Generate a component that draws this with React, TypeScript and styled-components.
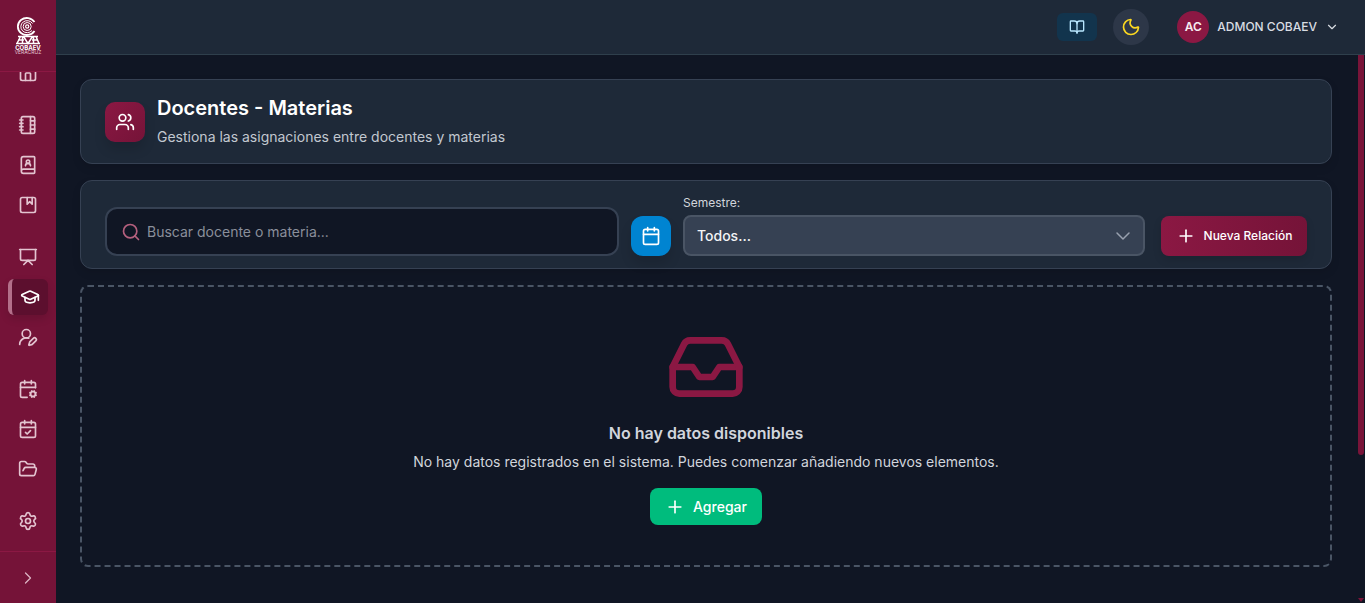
import React from "react";
import styled, { createGlobalStyle, css } from "styled-components";
import {
  House, NotebookTabs, BookUser, Album, Presentation, GraduationCap, UserRoundPen,
  CalendarCog, CalendarCheck, FolderOpen, Settings, ChevronRight, ChevronDown,
  BookOpen, Moon, Users, Search, Calendar, Plus, Inbox,
} from "lucide-react";

const Global = createGlobalStyle`
  *, *::before, *::after { box-sizing: border-box; }
  body {
    margin: 0;
    background: #101624;
    color: #d1d5dc;
    font-family: Inter, "Liberation Sans", sans-serif;
    font-size: 14px;
    line-height: 20px;
  }
  button, input, select { font: inherit; color: inherit; margin: 0; }
  h1, h2, p { margin: 0; }
`;

const Shell = styled.div`
  display: flex;
  height: 100vh;
`;

const Sidebar = styled.aside`
  flex: none;
  width: 56px;
  display: flex;
  flex-direction: column;
  background: #751338;
`;

const Brand = styled.a`
  flex: none;
  height: 72px;
  display: flex;
  align-items: center;
  justify-content: center;
  border-bottom: 1px solid #8b1843;
`;

const Nav = styled.nav`
  flex: 1;
  min-height: 0;
  overflow: hidden;
  display: flex;
  flex-direction: column;
  justify-content: flex-end;
  gap: 16px;
  padding: 0 8px 12px;
`;

const NavGroup = styled.div`
  flex: none;
  display: flex;
  flex-direction: column;
  gap: 4px;
`;

const NavLink = styled.a<{ $active?: boolean }>`
  height: 36px;
  display: flex;
  align-items: center;
  justify-content: center;
  border-radius: 6px;
  color: #e3c4d0;
  ${(p) => p.$active && css`
    color: #fff;
    background: #5c0f2e;
    border-left: 4px solid #b3708a;
    box-shadow: 0 4px 8px rgba(0, 0, 0, 0.12);
  `}
`;

const Expand = styled.button`
  flex: none;
  height: 52px;
  display: flex;
  align-items: center;
  justify-content: center;
  border: 0;
  border-top: 1px solid #8b1843;
  background: none;
  color: #dcb5c4;
`;

const Page = styled.div`
  flex: 1;
  min-width: 0;
  display: flex;
  flex-direction: column;
`;

const TopBar = styled.header`
  flex: none;
  height: 55px;
  display: flex;
  align-items: center;
  justify-content: flex-end;
  padding: 0 26px 0 24px;
  background: #1e2938;
  border-bottom: 1px solid #2f3f4c;
`;

const GuideButton = styled.button`
  width: 40px;
  height: 28px;
  display: grid;
  place-items: center;
  border: 0;
  border-radius: 6px;
  background: #12344d;
  color: #b8e6fe;
`;

const ThemeButton = styled.button`
  width: 36px;
  height: 36px;
  margin-left: 16px;
  display: grid;
  place-items: center;
  border: 0;
  border-radius: 50%;
  background: #2d3748;
  color: #fcd820;
`;

const Account = styled.button`
  margin-left: 28px;
  padding: 0;
  display: flex;
  align-items: center;
  gap: 8px;
  border: 0;
  background: none;
  color: #d8dce2;
  font-size: 12px;
  font-weight: 500;
`;

const Avatar = styled.span`
  width: 32px;
  height: 32px;
  display: grid;
  place-items: center;
  border-radius: 50%;
  background: #8b1843;
  color: #f7edf1;
  font-weight: 600;
`;

const Body = styled.div`
  flex: 1;
  min-height: 0;
  display: flex;
`;

const Main = styled.main`
  flex: 1;
  min-width: 0;
  display: flex;
  flex-direction: column;
  gap: 16px;
  padding: 24px 25px 0 24px;
  overflow: hidden;
`;

const ScrollTrack = styled.div`
  flex: none;
  width: 8px;
  display: flex;
  flex-direction: column;
  align-items: center;
  justify-content: space-between;
`;

const ScrollThumb = styled.div`
  width: 6px;
  height: 73%;
  border-radius: 0 0 3px 3px;
  background: #791439;
`;

const Card = styled.section`
  flex: none;
  border: 1px solid #364153;
  border-radius: 12px;
  background: #1e2938;
  padding: 12px 24px;
  display: flex;
  box-shadow: 0 4px 8px rgba(0, 0, 0, 0.1);
`;

const TitleCard = styled(Card)`
  align-items: center;
  gap: 12px;
  height: 85px;
`;

const TitleIcon = styled.div`
  width: 40px;
  height: 40px;
  display: grid;
  place-items: center;
  border-radius: 10px;
  background: linear-gradient(135deg, #8b1843, #751338);
  color: #fff;
  box-shadow: 0 8px 12px rgba(0, 0, 0, 0.12);
`;

const TitleText = styled.div`
  display: flex;
  flex-direction: column;
  gap: 5px;
  padding-bottom: 3px;
`;

const Title = styled.h1`
  font-size: 20px;
  line-height: 28px;
  font-weight: 600;
  color: #fff;
`;

const Subtitle = styled.p`
  color: #c2c8d0;
`;

const FilterCard = styled(Card)`
  align-items: flex-end;
`;

const SearchField = styled.label`
  flex: 1;
  height: 49px;
  display: flex;
  align-items: center;
  gap: 6px;
  padding: 0 14px;
  border: 2px solid #364153;
  border-radius: 12px;
  background: #101624;
  color: #b5607e;
`;

const SearchInput = styled.input`
  flex: 1;
  min-width: 0;
  padding: 0;
  border: 0;
  outline: 0;
  background: none;
  color: #fff;
  &::placeholder { color: #8a8f9b; opacity: 1; }
`;

const CalendarButton = styled.button`
  width: 40px;
  height: 40px;
  margin-left: 12px;
  display: grid;
  place-items: center;
  border: 0;
  border-radius: 12px;
  background: #0084d1;
  color: #fff;
  box-shadow: 0 8px 12px rgba(0, 0, 0, 0.12);
`;

const SelectField = styled.div`
  flex: 0 1 462px;
  margin-left: 12px;
  display: flex;
  flex-direction: column;
  gap: 2px;
`;

const SelectLabel = styled.label`
  font-size: 12px;
  color: #d1d5dc;
`;

const SelectBox = styled.div`
  display: grid;
  align-items: center;
  justify-items: end;
  & > * { grid-area: 1 / 1; }
  & > svg { margin-right: 10px; color: #99a1af; pointer-events: none; }
`;

const Select = styled.select`
  width: 100%;
  height: 41px;
  padding: 0 12px;
  appearance: none;
  border: 2px solid #4a5565;
  border-radius: 8px;
  background: #364153;
  color: #f3f4f6;
  font-weight: 500;
`;

const Action = styled.button<{ $tone: "wine" | "green" }>`
  flex: none;
  display: flex;
  align-items: center;
  justify-content: center;
  gap: 8px;
  padding: 0;
  border: 0;
  border-radius: 8px;
  color: #fff;
  font-weight: 500;
  white-space: nowrap;
  ${(p) => p.$tone === "wine" ? css`
    width: 146px;
    height: 40px;
    margin-left: 16px;
    font-size: 12px;
    background: linear-gradient(90deg, #8b1843, #751338);
    box-shadow: 0 4px 8px rgba(0, 0, 0, 0.12);
  ` : css`
    width: 112px;
    height: 37px;
    background: #00bc7d;
  `}
`;

const Empty = styled.section`
  flex: none;
  height: 282px;
  display: flex;
  flex-direction: column;
  align-items: center;
  padding-top: 40px;
  border: 2px dashed #4a5565;
  border-radius: 8px;
  color: #d1d5dc;
`;

const EmptyIcon = styled.div`
  height: 80px;
  color: #8b1843;
`;

const EmptyTitle = styled.h2`
  margin-top: 14px;
  font-size: 16px;
  line-height: 24px;
  font-weight: 600;
`;

const EmptyText = styled.p`
  margin: 7px 0 16px;
`;

const LogoMark = () => (
  <svg width="28" height="38" viewBox="0 0 28 38" fill="none" stroke="#fff" role="img" aria-label="COBAEV Veracruz">
    <path d="M20.500 5A9 8.500 0 1 0 20.500 14" strokeWidth="1.8" />
    <path d="M18.500 6.500A6.300 6 0 1 0 18 13.500" strokeWidth="1" />
    <circle cx="13.200" cy="9.500" r="4" strokeWidth="1" />
    <circle cx="13.200" cy="9.500" r="1.600" strokeWidth="1.200" />
    <path d="M4 19.500h20M2 26.500h24M3 26.500L6.500 19.500M4 23h6M8.500 19.500v7M9.500 19.500l4.500 7 4.500-7M19.500 19.500v7M18 23h6M22 19.500l3 7" strokeWidth="1.5" />
    <text x="14" y="33" textAnchor="middle" fill="#fff" stroke="none" fontSize="6" fontWeight="700" fontFamily="Inter, sans-serif">COBAEV</text>
    <text x="14" y="37" textAnchor="middle" fill="#e6c8d4" stroke="none" fontSize="5" fontFamily="Inter, sans-serif">VERACRUZ</text>
  </svg>
);

const groups = [
  [{ label: "Inicio", Icon: House }],
  [
    { label: "Periodos", Icon: NotebookTabs },
    { label: "Directorio", Icon: BookUser },
    { label: "Materias", Icon: Album },
  ],
  [
    { label: "Grupos", Icon: Presentation },
    { label: "Docentes", Icon: GraduationCap, active: true },
    { label: "Usuarios", Icon: UserRoundPen },
  ],
  [
    { label: "Horarios", Icon: CalendarCog },
    { label: "Asistencias", Icon: CalendarCheck },
    { label: "Archivos", Icon: FolderOpen },
  ],
  [{ label: "Ajustes", Icon: Settings }],
];

export default function App() {
  return (
    <>
      <Global />
      <Shell>
        <Sidebar>
          <Brand href="#"><LogoMark /></Brand>
          <Nav>
            {groups.map((group, i) => (
              <NavGroup key={i}>
                {group.map(({ label, Icon, ...rest }) => (
                  <NavLink key={label} href="#" aria-label={label} $active={"active" in rest}>
                    <Icon size={20} />
                  </NavLink>
                ))}
              </NavGroup>
            ))}
          </Nav>
          <Expand aria-label="Expandir"><ChevronRight size={20} strokeWidth={1.5} /></Expand>
        </Sidebar>
        <Page>
          <TopBar>
            <GuideButton aria-label="Manual"><BookOpen size={16} /></GuideButton>
            <ThemeButton aria-label="Tema"><Moon size={20} /></ThemeButton>
            <Account>
              <Avatar>AC</Avatar>
              ADMON COBAEV
              <ChevronDown size={14} />
            </Account>
          </TopBar>
          <Body>
            <Main>
              <TitleCard>
                <TitleIcon><Users size={20} /></TitleIcon>
                <TitleText>
                  <Title>Docentes - Materias</Title>
                  <Subtitle>Gestiona las asignaciones entre docentes y materias</Subtitle>
                </TitleText>
              </TitleCard>
              <FilterCard>
                <SearchField>
                  <Search size={20} />
                  <SearchInput aria-label="Buscar" placeholder="Buscar docente o materia..." />
                </SearchField>
                <CalendarButton aria-label="Calendario"><Calendar size={20} /></CalendarButton>
                <SelectField>
                  <SelectLabel htmlFor="semestre">Semestre:</SelectLabel>
                  <SelectBox>
                    <Select id="semestre"><option>Todos...</option></Select>
                    <ChevronDown size={24} strokeWidth={1.5} />
                  </SelectBox>
                </SelectField>
                <Action $tone="wine"><Plus size={20} />Nueva Relación</Action>
              </FilterCard>
              <Empty>
                <EmptyIcon><Inbox size={80} /></EmptyIcon>
                <EmptyTitle>No hay datos disponibles</EmptyTitle>
                <EmptyText>No hay datos registrados en el sistema. Puedes comenzar añadiendo nuevos elementos.</EmptyText>
                <Action $tone="green"><Plus size={20} />Agregar</Action>
              </Empty>
            </Main>
            <ScrollTrack aria-hidden="true">
              <ScrollThumb />
              <svg width="6" height="6" viewBox="0 0 6 6"><path d="M0 1h6L3 5z" fill="#791439" /></svg>
            </ScrollTrack>
          </Body>
        </Page>
      </Shell>
    </>
  );
}
